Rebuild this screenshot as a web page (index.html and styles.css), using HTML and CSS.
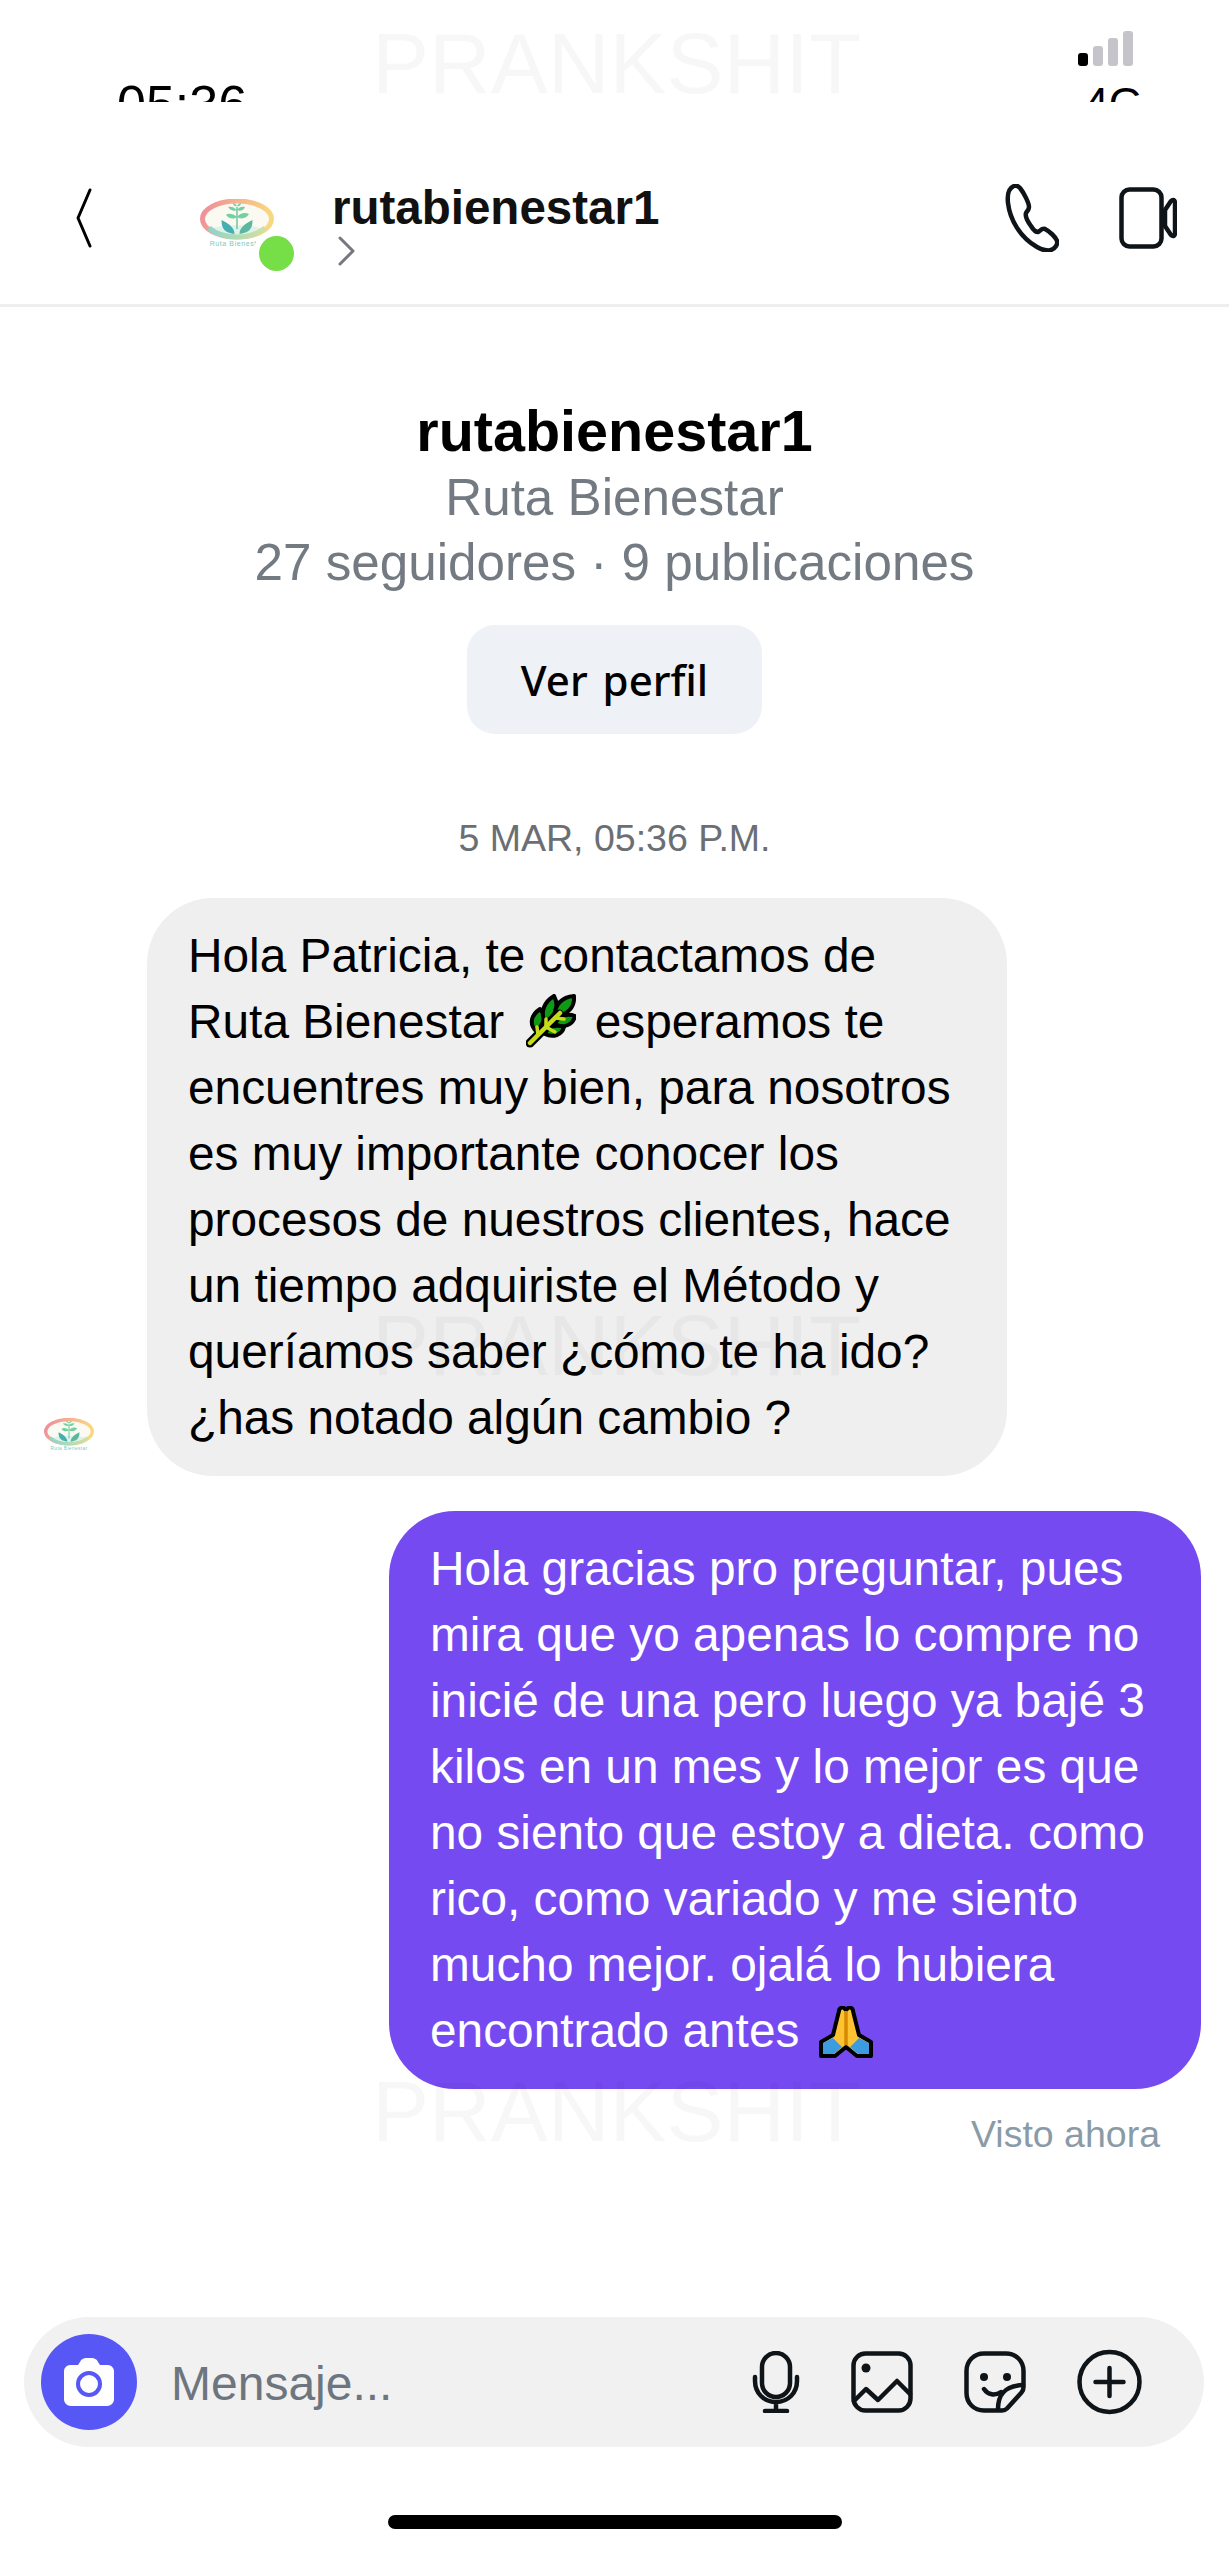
FILE: index.html
```html
<!DOCTYPE html>
<html lang="es">
<head>
  <meta charset="UTF-8">
  <title>rutabienestar1</title>
  <link rel="stylesheet" href="styles.css">
</head>
<body>
  <svg class="defs" width="0" height="0">
    <defs>
      <linearGradient id="ring" x1="0" y1="0" x2="1" y2="0.2">
        <stop offset="0" stop-color="#ee8a9c"/>
        <stop offset="0.55" stop-color="#f6b88c"/>
        <stop offset="1" stop-color="#f8d87e"/>
      </linearGradient>
      <linearGradient id="ringlow" x1="0" y1="0" x2="1" y2="0">
        <stop offset="0" stop-color="#8ed5cb"/>
        <stop offset="1" stop-color="#d4dfa0"/>
      </linearGradient>
      <symbol id="logo" viewBox="0 0 74 50">
        <ellipse cx="37" cy="20" rx="34.500" ry="18" fill="#fbfaf2" stroke="url(#ring)" stroke-width="5"/>
        <path d="M12 30c7 5 16 6 25 6s18-1 25-6c-6-5-44-5-50 0z" fill="#dff2ea"/>
        <path d="M9 29c7 6 17 9 28 9s21-3 28-9" fill="none" stroke="url(#ringlow)" stroke-width="5"/>
        <path d="M37 30V8" stroke="#6cc79e" stroke-width="1.500" fill="none"/>
        <path d="M37 18c-4-4-9-4-11-2 2 3 7 5 11 2zM37 18c3-4 8-5 12-3-2 4-8 6-12 3zM37 11c-3-3-6-4-9-3 2 3 6 5 9 3zM37 11c2-3 5-4 8-3-1 3-5 5-8 3zM37 7c-1-2-3-3-4-3 0 2 2 4 4 3zM37 7c1-2 3-3 4-3 0 2-2 4-4 3z" fill="#74cfa2"/>
        <path d="M34.500 35c0-6-5-10-13-14 0 5 1 8 3 10 3 3 6 3 10 4z" fill="#45aeb0"/>
        <path d="M39.500 35c0-6 5-10 13-14 0 5-1 8-3 10-3 3-6 3-10 4z" fill="#5bb89f"/>
        <text x="37" y="47" class="logo-text">Ruta Bienestar</text>
      </symbol>
    </defs>
  </svg>

  <div class="watermark mark-1">PRANKSHIT</div>
  <div class="watermark mark-2">PRANKSHIT</div>
  <div class="watermark mark-3">PRANKSHIT</div>

  <div class="status">
    <span class="time">05:36</span>
    <div class="network">
      <div class="signal">
        <i class="bar bar-1"></i><i class="bar bar-2"></i><i class="bar bar-3"></i><i class="bar bar-4"></i>
      </div>
      <span class="carrier">4G</span>
    </div>
  </div>

  <header class="topbar">
    <svg class="back" width="16" height="60" viewBox="0 0 16 60"><path d="M14 2 2 30l12 28" fill="none" stroke="#000" stroke-width="3" stroke-linecap="round" stroke-linejoin="round"/></svg>
    <div class="avatar">
      <svg width="74" height="50"><use href="#logo"/></svg>
      <span class="online"></span>
    </div>
    <div class="who">
      <div class="who-name">rutabienestar1</div>
      <svg class="who-more" width="17" height="30" viewBox="0 0 17 30"><path d="M2 2 15 15 2 28" fill="none" stroke="#77777f" stroke-width="3" stroke-linecap="round" stroke-linejoin="round"/></svg>
    </div>
    <div class="actions">
      <svg width="54" height="68" viewBox="0 0 54 68"><path d="M9 2c-5 2-7 8-6 17 2 17 12 34 29 44 5 3 11 4 14 3 4-1 7-6 6-9-1-4-8-10-12-12-3-1-5 2-7 3-2 0-4-1-7-6-3-4-6-10-5-13 1-2 3-3 3-6 0-4-5-14-9-19-2-2-4-3-6-2z" fill="none" stroke="#0f1418" stroke-width="4.500" stroke-linejoin="round"/></svg>
      <svg width="58" height="62" viewBox="0 0 58 62"><rect x="2.500" y="2.500" width="40" height="57" rx="8" fill="none" stroke="#0f1418" stroke-width="4.500"/><path d="M46 23 52 14c2-2 4-1 4 2v30c0 3-2 4-4 2l-6-9z" fill="none" stroke="#0f1418" stroke-width="4.500" stroke-linejoin="round"/></svg>
    </div>
  </header>

  <main class="chat">
    <section class="profile">
      <h1 class="profile-name">rutabienestar1</h1>
      <p class="profile-line">Ruta Bienestar</p>
      <p class="profile-line">27 seguidores · 9 publicaciones</p>
      <button class="profile-btn">Ver perfil</button>
    </section>

    <div class="date">5 MAR, 05:36 P.M.</div>

    <div class="row">
      <svg class="row-avatar" width="50" height="34"><use href="#logo"/></svg>
      <div class="bubble bubble-in">
        Hola Patricia, te contactamos de<br>
        Ruta Bienestar
        <svg class="emoji-leaf" width="50" height="54" viewBox="0 0 50 54">
          <g fill="#0f9a16" stroke="#000" stroke-width="4" stroke-linejoin="round">
            <path d="M10 37C3 30 5 21 14 15c6 6 5 15-4 22z"/>
            <path d="M19 28C14 18 18 8 28 2c5 9 3 19-9 26z"/>
            <path d="M29 22C28 11 36 3 48 2c1 11-6 19-19 20z"/>
            <path d="M29 30c3-8 12-11 20-8-2 9-12 13-20 8z"/>
            <path d="M19 40c3-8 11-10 19-7-2 8-11 11-19 7z"/>
          </g>
          <path d="M4 49 33 20" fill="none" stroke="#000" stroke-width="9" stroke-linecap="round"/>
          <path d="M4 49 34 19" fill="none" stroke="#c5dc1a" stroke-width="4.500" stroke-linecap="round"/>
          <path d="M12 41l-1-8M20 33l0-8M20 33l9 5M29 24l9 1" fill="none" stroke="#c5dc1a" stroke-width="3.500" stroke-linecap="round"/>
        </svg>
        esperamos te<br>
        encuentres muy bien, para nosotros<br>
        es muy importante conocer los<br>
        procesos de nuestros clientes, hace<br>
        un tiempo adquiriste el Método y<br>
        queríamos saber ¿cómo te ha ido?<br>
        ¿has notado algún cambio ?
      </div>
    </div>

    <div class="row row-out">
      <div class="bubble bubble-out">
        Hola gracias pro preguntar, pues<br>
        mira que yo apenas lo compre no<br>
        inicié de una pero luego ya bajé 3<br>
        kilos en un mes y lo mejor es que<br>
        no siento que estoy a dieta. como<br>
        rico, como variado y me siento<br>
        mucho mejor. ojalá lo hubiera<br>
        encontrado antes
        <svg class="emoji-pray" width="54" height="52" viewBox="0 0 54 52">
          <path d="M2 50V36l12-7 6-24c0-3 3-4 5-3l2 2 2-2c2-1 5 0 5 3l6 24 12 7v14H38L27 41 16 50z" fill="#ffc233" stroke="#000" stroke-width="4" stroke-linejoin="round"/>
          <path d="M4 48V37l10-5 9 9-8 7zM50 48V37l-10-5-9 9 8 7z" fill="#3d9be0"/>
          <path d="M27 5v34" stroke="#d58a00" stroke-width="3.500"/>
        </svg>
      </div>
    </div>
    <div class="seen">Visto ahora</div>
  </main>

  <footer class="composer">
    <div class="camera">
      <svg width="52" height="50" viewBox="0 0 52 50"><path d="M7 8h8l2-3c1-3 4-4 6-4h6c2 0 5 1 6 4l2 3h8c3 0 6 3 6 6v28c0 4-3 7-7 7H8c-4 0-7-3-7-7V14c0-3 3-6 6-6z" fill="#fff"/><circle cx="26" cy="27" r="11" fill="none" stroke="#5757f5" stroke-width="4"/></svg>
    </div>
    <span class="placeholder">Mensaje...</span>
    <div class="tools">
      <svg width="48" height="62" viewBox="0 0 48 62"><rect x="10" y="2" width="28" height="44" rx="14" fill="none" stroke="#0f1418" stroke-width="4.500"/><path d="M3 26v4c0 12 9 21 21 21s21-9 21-21v-4M24 51v9M13 60h22" fill="none" stroke="#0f1418" stroke-width="4.500" stroke-linecap="round"/></svg>
      <svg width="62" height="62" viewBox="0 0 62 62"><rect x="2.500" y="2.500" width="57" height="57" rx="12" fill="none" stroke="#0f1418" stroke-width="4.500"/><circle cx="15" cy="17" r="4.500" fill="#0f1418"/><path d="M3 50 15 38l12 11 19-19 13 13" fill="none" stroke="#0f1418" stroke-width="4.500" stroke-linejoin="round" stroke-linecap="round"/></svg>
      <svg width="62" height="62" viewBox="0 0 62 62"><path d="M38 59.500H20C10 59.500 2.500 52 2.500 42V20C2.500 10 10 2.500 20 2.500h22C52 2.500 59.500 10 59.500 20v16c0 2-.6 4-2 5.500L43 57.500c-1.400 1.400-3 2-5 2z" fill="none" stroke="#0f1418" stroke-width="4.500" stroke-linejoin="round"/><circle cx="20" cy="26" r="4" fill="#0f1418"/><circle cx="43" cy="26" r="4" fill="#0f1418"/><path d="M20 38c4 6 11 7 17 3M34 58c0-14 6-23 25-24" fill="none" stroke="#0f1418" stroke-width="4.500" stroke-linecap="round"/></svg>
      <svg width="65" height="66" viewBox="0 0 65 66"><circle cx="32.500" cy="33" r="30" fill="none" stroke="#0f1418" stroke-width="4.500"/><path d="M32.500 19v28M18.500 33h28" fill="none" stroke="#0f1418" stroke-width="4.500" stroke-linecap="round"/></svg>
    </div>
  </footer>

  <div class="home"><span class="home-bar"></span></div>
</body>
</html>
```

FILE: styles.css
```css
body {
  font-family: "Liberation Sans", Arial, sans-serif;
  background-color: #fff;
  color: #000;
  margin: 0;
  padding: 0;
  width: 1229px;
  height: 2560px;
  position: relative;
  overflow: hidden;
}

.defs {
  position: absolute;
}

.logo-text {
  font-size: 7px;
  fill: #7cc7bf;
  text-anchor: middle;
  letter-spacing: 0.6px;
}

.watermark {
  position: absolute;
  left: 372px;
  font-size: 85.500px;
  line-height: 1;
  color: rgba(0, 0, 0, 0.03);
  pointer-events: none;
}

.mark-1 { top: 21px; }
.mark-2 { top: 1303px; }
.mark-3 { top: 2069px; }

/* status bar, cut off at the bottom like in the capture */
.status {
  height: 102px;
  overflow: hidden;
  display: flex;
  justify-content: space-between;
  padding: 0 86px 0 117px;
  box-sizing: border-box;
}

.time {
  font-size: 52px;
  line-height: 52px;
  padding-top: 78px;
}

.network {
  display: flex;
  flex-direction: column;
  align-items: flex-end;
  padding-top: 31px;
}

.signal {
  display: flex;
  align-items: flex-end;
  gap: 5px;
  height: 35px;
  margin-right: 10px;
}

.bar {
  width: 10px;
  border-radius: 3px;
  background-color: #c4c4ca;
}

.bar-1 { height: 13px; background-color: #000; }
.bar-2 { height: 20px; }
.bar-3 { height: 28px; }
.bar-4 { height: 35px; }

.carrier {
  font-size: 44px;
  line-height: 44px;
  margin-top: 16px;
}

.topbar {
  height: 205px;
  box-sizing: border-box;
  display: flex;
  align-items: center;
  padding: 30px 52px 0 76px;
  border-bottom: 3px solid #eee;
}

.avatar {
  position: relative;
  width: 74px;
  height: 50px;
  margin-left: 108px;
  margin-top: 12px;
}

.online {
  position: absolute;
  left: 59px;
  top: 37px;
  width: 35px;
  height: 35px;
  border-radius: 50%;
  background-color: #76de47;
  box-shadow: 0 0 0 6px #fff;
}

.who {
  margin-left: 58px;
  margin-top: 13px;
  display: flex;
  flex-direction: column;
  align-items: flex-start;
}

.who-name {
  font-size: 47.500px;
  font-weight: bold;
  line-height: 50px;
  color: #111;
}

.who-more {
  margin: 3px 0 0 6px;
}

.actions {
  margin-left: auto;
  display: flex;
  align-items: center;
  gap: 60px;
}

.chat {
  padding-top: 90px;
}

.profile {
  display: flex;
  flex-direction: column;
  align-items: center;
}

.profile-name {
  margin: 0;
  font-size: 57.500px;
  line-height: 68px;
  color: #000;
}

.profile-line {
  margin: 0;
  font-size: 51.200px;
  line-height: 65px;
  color: #737a82;
}

.profile-btn {
  margin-top: 30px;
  width: 295px;
  height: 109px;
  border: none;
  border-radius: 28px;
  background-color: #eef1f5;
  font-family: "Noto Sans", sans-serif;
  font-weight: 500;
  font-size: 42px;
  word-spacing: 4px;
  color: #000;
}

.date {
  margin-top: 82px;
  text-align: center;
  font-size: 37.500px;
  line-height: 44px;
  color: #6b6f73;
}

.row {
  display: flex;
  align-items: flex-end;
  margin-top: 38px;
}

.row-out {
  justify-content: flex-end;
  margin-top: 35px;
  padding-right: 28px;
}

.row-avatar {
  margin: 0 53px 24px 44px;
}

.bubble {
  box-sizing: border-box;
  padding: 25px 41px;
  font-size: 47.800px;
  line-height: 66px;
  border-radius: 66px;
  white-space: nowrap;
}

.bubble-in {
  width: 860px;
  background-color: #efefef;
}

.bubble-out {
  width: 812px;
  background-color: #764af1;
  color: #fff;
}

.emoji-leaf {
  vertical-align: -10px;
  margin: 0 5px 0 9px;
}

.emoji-pray {
  vertical-align: -11px;
  margin-left: 6px;
}

.seen {
  margin-top: 23px;
  padding-right: 69px;
  text-align: right;
  font-size: 37.500px;
  line-height: 44px;
  color: #8a9ba8;
}

.composer {
  position: absolute;
  left: 24px;
  top: 2317px;
  width: 1180px;
  height: 130px;
  box-sizing: border-box;
  display: flex;
  align-items: center;
  padding: 0 62px 0 17px;
  border-radius: 65px;
  background-color: #f1f1f1;
}

.camera {
  width: 96px;
  height: 96px;
  border-radius: 50%;
  background-color: #5757f5;
  display: flex;
  align-items: center;
  justify-content: center;
}

.placeholder {
  margin-left: 34px;
  padding-top: 3px;
  font-size: 48px;
  color: #6d757e;
}

.tools {
  margin-left: auto;
  display: flex;
  align-items: center;
  gap: 51px;
}

.home {
  position: absolute;
  left: 0;
  right: 0;
  top: 2515px;
  display: flex;
  justify-content: center;
}

.home-bar {
  width: 454px;
  height: 14px;
  border-radius: 7px;
  background-color: #000;
}
```
